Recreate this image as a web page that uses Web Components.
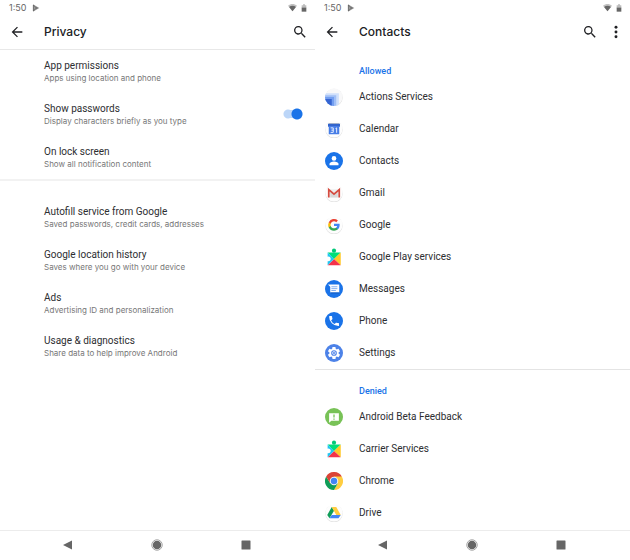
<!DOCTYPE html>
<html lang="en">
<head>
<meta charset="utf-8">
<meta name="viewport" content="width=device-width, initial-scale=1">
<title>Privacy and contacts permissions</title>
<style>
html, body { margin: 0; height: 100%; }
body { background: #fff; color: #2d2e31; font: 10px/14px Roboto, sans-serif; }
</style>
</head>
<body>
<settings-board>
  <phone-screen heading="Privacy" lined>
    <app-icon slot="actions" name="search" label="Search"></app-icon>
    <setting-group>
      <setting-row name="App permissions" note="Apps using location and phone"></setting-row>
      <setting-row name="Show passwords" note="Display characters briefly as you type" switch></setting-row>
      <setting-row name="On lock screen" note="Show all notification content"></setting-row>
    </setting-group>
    <setting-group spaced>
      <setting-row name="Autofill service from Google" note="Saved passwords, credit cards, addresses"></setting-row>
      <setting-row name="Google location history" note="Saves where you go with your device"></setting-row>
      <setting-row name="Ads" note="Advertising ID and personalization"></setting-row>
      <setting-row name="Usage &amp; diagnostics" note="Share data to help improve Android"></setting-row>
    </setting-group>
  </phone-screen>
  <phone-screen heading="Contacts">
    <app-icon slot="actions" name="search" label="Search"></app-icon>
    <app-icon slot="actions" name="more" label="More options"></app-icon>
    <permission-group heading="Allowed">
      <app-row icon="actions">Actions Services</app-row>
      <app-row icon="calendar">Calendar</app-row>
      <app-row icon="contacts">Contacts</app-row>
      <app-row icon="gmail">Gmail</app-row>
      <app-row icon="google">Google</app-row>
      <app-row icon="play">Google Play services</app-row>
      <app-row icon="messages">Messages</app-row>
      <app-row icon="phone">Phone</app-row>
      <app-row icon="settings">Settings</app-row>
    </permission-group>
    <permission-group heading="Denied">
      <app-row icon="feedback">Android Beta Feedback</app-row>
      <app-row icon="play">Carrier Services</app-row>
      <app-row icon="chrome">Chrome</app-row>
      <app-row icon="drive">Drive</app-row>
    </permission-group>
  </phone-screen>
</settings-board>
<script>
const plate = '<circle cx="12" cy="12.7" r="11.6" fill="#dedede"/><circle cx="12" cy="11.8" r="11.6" fill="#fdfdfd"/>';
const disc = c => `<circle cx="12" cy="12" r="12" fill="${c}"/>`;
const ICONS = {
  back: '<path fill="currentColor" d="M20 11H7.8l5.6-5.6L12 4l-8 8 8 8 1.4-1.4L7.8 13H20z"/>',
  search: '<path fill="currentColor" d="M15.5 14h-.8l-.3-.3A6.5 6.5 0 1 0 13.7 14.4l.3.3v.8l5 5 1.5-1.5zm-6 0a4.5 4.5 0 1 1 0-9 4.5 4.5 0 0 1 0 9z"/>',
  more: '<g fill="currentColor"><circle cx="12" cy="5" r="2.2"/><circle cx="12" cy="12" r="2.2"/><circle cx="12" cy="19" r="2.2"/></g>',
  store: '<path fill="#999" d="M3 1l19 11L3 23z"/><path fill="none" stroke="#5a5a5a" stroke-width="2" d="M4 3v18M4 3l12 12M4 21L16 9"/>',
  wifi: '<path fill="#c2c2c2" d="M12 22L0 7C7 1 17 1 24 7z"/><path fill="#666" d="M12 22L3 10.500c5-4 13-4 18 0z"/>',
  battery: '<path fill="#bdbdbd" d="M9 1h6v3h4v9H5V4h4z"/><path fill="#666" d="M5 11h14v12H5z"/>',
  navBack: '<path fill="#666" d="M20 3v18L2 12z"/>',
  navHome: '<circle cx="12" cy="12" r="10.500" fill="none" stroke="#888" stroke-width="1.500"/><circle cx="12" cy="12" r="8.500" fill="#666"/>',
  navRecent: '<rect x="3" y="3" width="18" height="18" rx="1" fill="#666"/>',
  actions: '<circle cx="12" cy="12.7" r="11.6" fill="#dedede"/><circle cx="12" cy="11.8" r="11.6" fill="#f8f8f9"/><clipPath id="a"><circle cx="12" cy="12" r="12"/></clipPath><g clip-path="url(#a)"><path fill="#d0e0fb" d="M0 7h18.500v17H0z"/><path fill="#a0bff6" d="M0 9.500h15v15H0z"/><path fill="#739ef0" d="M0 12h12v12H0z"/><path fill="#3565d2" d="M0 14.500h9v10H0z"/></g>',
  calendar: plate + '<path fill="#c8c8c8" d="M5 4h14v3H5z"/><path fill="#3264cc" d="M4 5h16v4H4z"/><path fill="#477de6" d="M5 8h14v11H5z"/><path fill="none" stroke="#e8f0ff" stroke-width="1.300" d="M7.500 10.500h3.500v6H7.500m1-3H11m3-2l1.500-1V17"/>',
  contacts: disc('#1a73e8') + '<circle cx="12" cy="8.500" r="3.100" fill="#fff"/><path fill="#fff" d="M6 17.500v-1.700c0-2 3-3.200 6-3.200s6 1.200 6 3.200v1.700z"/>',
  gmail: plate + '<path fill="#eee" d="M5 7h14v11H5z"/><path fill="#d9d9d9" d="M7 9l5 5 5-5v9H7z"/><path fill="none" stroke="#d54b3f" stroke-width="2.300" d="M5 18V7.500l7 6 7-6V18"/>',
  google: plate + '<g transform="translate(3.500 3.200) scale(.71)"><path fill="#4285f4" d="M22.600 12.250c0-.8-.1-1.500-.2-2.250H12v4.300h5.900a5 5 0 0 1-2.200 3.300v2.800h3.600c2.100-2 3.300-4.800 3.300-8.150z"/><path fill="#34a853" d="M12 23c3 0 5.500-1 7.300-2.600l-3.600-2.800c-1 .7-2.300 1.100-3.700 1.100-2.900 0-5.300-1.900-6.200-4.600H2.200v2.800A11 11 0 0 0 12 23z"/><path fill="#fbbc05" d="M5.800 14.100a6.600 6.600 0 0 1 0-4.200V7.100H2.200a11 11 0 0 0 0 9.800z"/><path fill="#ea4335" d="M12 5.400c1.600 0 3 .6 4.200 1.600l3.100-3.100A11 11 0 0 0 2.200 7.100l3.600 2.800C6.700 7.300 9.100 5.400 12 5.400z"/></g>',
  play: '<path fill="#00df78" d="M3.500 6H21l-9 9z"/><path fill="#ffc928" d="M21 6v17l-9-8.500z"/><path fill="#f43249" d="M21 23H3.500l8.500-8.500z"/><path fill="#20c6f3" d="M3.500 6l8.500 8.500L3.500 23v-5.500c5.500 1 5.500-7 0-6z"/><circle cx="12" cy="3.500" r="2.800" fill="#00c878"/>',
  messages: disc('#1a73e8') + '<path fill="#fff" d="M4 6h15v10.500H7V9z"/><path stroke="#82aff2" stroke-width="1.300" d="M8.500 9h8M8.500 11.500h8M8.500 14h6"/><path fill="#135cc0" d="M7 16.500h12v1.500H8z"/>',
  phone: disc('#1a73e8') + '<path fill="#fff" transform="translate(3.300 3.300) scale(.73)" d="M6.600 10.800a15 15 0 0 0 6.600 6.600l2.200-2.200c.3-.3.700-.4 1-.2 1.200.4 2.400.6 3.600.6.600 0 1 .4 1 1V20c0 .6-.4 1-1 1A17 17 0 0 1 3 4c0-.6.400-1 1-1h3.500c.6 0 1 .4 1 1 0 1.300.2 2.500.6 3.600.1.400 0 .8-.3 1z"/>',
  settings: disc('#4c82e8') + '<path fill="#fff" transform="translate(1.800 1.800) scale(.85)" d="M19.100 12.900a7 7 0 0 0 0-1.800l2-1.600c.2-.1.200-.4.100-.6l-1.900-3.300c-.1-.2-.4-.3-.6-.2l-2.400 1a7 7 0 0 0-1.600-1l-.4-2.500c0-.2-.2-.4-.5-.4h-3.800c-.2 0-.4.2-.5.400l-.3 2.500a7 7 0 0 0-1.600 1l-2.400-1c-.2-.1-.5 0-.6.200L2.700 8.900c-.1.200 0 .5.200.6l2 1.600a7 7 0 0 0 0 1.800l-2 1.600c-.2.100-.3.400-.2.600l1.900 3.300c.1.200.4.300.6.200l2.400-1a7 7 0 0 0 1.600 1l.4 2.500c0 .3.200.4.500.4h3.800c.3 0 .5-.2.500-.4l.4-2.500a7 7 0 0 0 1.600-1l2.400 1c.2.100.5 0 .6-.2l1.900-3.300c.1-.2 0-.5-.2-.6z"/><circle cx="12" cy="12" r="3.800" fill="#4c82e8"/><circle cx="12" cy="12" r="2.300" fill="#fff"/><circle cx="12" cy="12" r="1.300" fill="#4c82e8"/>',
  feedback: disc('#78c257') + '<path fill="#fff" d="M5.500 7h13v10h-10l-3 2.500z"/><path stroke="#78c257" stroke-width="1.700" d="M12 8.500v4M12 14v1.700"/>',
  chrome: '<path fill="#db4437" d="M12 12L1.600 6A12 12 0 0 1 22.400 6z"/><path fill="#0f9d58" d="M12 12v12A12 12 0 0 1 1.600 6L7 15z"/><path fill="#ffcd40" d="M12 6h10.400A12 12 0 0 1 12 24l5.200-9z"/><path fill="#0f9d58" d="M12 24l5.200-9H7z"/><path fill="#db4437" d="M1.600 6H12L6.800 15z"/><circle cx="12" cy="12" r="5.700" fill="#f4f4f4"/><circle cx="12" cy="12" r="4.300" fill="#4285f4"/>',
  drive: plate + '<path fill="#0f9d58" d="M9 4L3 14.500 6 19l6-10z"/><path fill="#ffcd40" d="M9 4h6l6 10.500h-6z"/><path fill="#4285f4" d="M9 14.500h12L18 19H6z"/>'
};

class BaseElement extends HTMLElement {
  connectedCallback() {
    if (!this.shadowRoot) this.attachShadow({ mode: 'open' }).innerHTML = this.render();
  }
  text(name) {
    return (this.getAttribute(name) || '').replace(/&/g, '&amp;').replace(/</g, '&lt;');
  }
}

customElements.define('svg-icon', class extends BaseElement {
  render() {
    return `<style>
      :host { display: block; width: 18px; height: 18px; flex: none; }
      svg { display: block; width: 100%; height: 100%; }
    </style><svg viewBox="0 0 24 24" aria-hidden="true">${ICONS[this.getAttribute('name')]}</svg>`;
  }
});

customElements.define('app-icon', class extends BaseElement {
  render() {
    return `<style>
      :host { display: block; flex: none; }
      button { display: grid; place-items: center; width: 26px; height: 26px; padding: 0; border: 0; background: none; color: #202124; cursor: pointer; }
      svg-icon { width: var(--glyph, 16px); height: var(--glyph, 16px); }
    </style><button type="button" aria-label="${this.text('label')}"><svg-icon name="${this.getAttribute('name')}"></svg-icon></button>`;
  }
});

customElements.define('status-bar', class extends BaseElement {
  render() {
    return `<style>
      :host { display: flex; align-items: center; height: 15px; padding: 0 7px 0 9px; gap: 3px; font: 9px/12px Inter, sans-serif; color: #666; }
      svg-icon { width: 8px; height: 8px; }
      .store { margin: 0 auto 0 3px; }
      .wifi { width: 9px; height: 9px; }
    </style><time>1:50</time><svg-icon class="store" name="store"></svg-icon><svg-icon class="wifi" name="wifi"></svg-icon><svg-icon name="battery"></svg-icon>`;
  }
});

customElements.define('app-bar', class extends BaseElement {
  render() {
    return `<style>
      :host { display: flex; align-items: center; height: 34px; padding: 0 1px 0 4px; border-bottom: 1px solid transparent; }
      :host([lined]) { border-color: #e8e8e8; padding-right: 2px; }
      h1 { flex: 1; margin: 0 0 0 14px; font: 500 12px/18px Inter, sans-serif; color: #202124; }
    </style><app-icon name="back" label="Back"></app-icon><h1>${this.text('heading')}</h1><slot></slot>`;
  }
});

customElements.define('nav-bar', class extends BaseElement {
  render() {
    return `<style>
      :host { display: block; border-top: 1px solid #ececec; background: #fff; }
      nav { display: flex; justify-content: center; gap: 63px; height: 27px; padding: 0 1px 2px 0; align-items: center; --glyph: 12px; }
    </style><nav aria-label="System">
      <app-icon name="navBack" label="Back"></app-icon>
      <app-icon name="navHome" label="Home"></app-icon>
      <app-icon name="navRecent" label="Recent apps"></app-icon>
    </nav>`;
  }
});

customElements.define('phone-screen', class extends BaseElement {
  render() {
    return `<style>
      :host { display: flex; flex-direction: column; min-width: 0; }
      main { flex: 1; }
    </style><status-bar></status-bar>
    <app-bar heading="${this.text('heading')}" ${this.hasAttribute('lined') ? 'lined' : ''}><slot name="actions"></slot></app-bar>
    <main><slot></slot></main><nav-bar></nav-bar>`;
  }
});

customElements.define('setting-group', class extends BaseElement {
  render() {
    return `<style>
      :host { display: block; }
      :host([spaced]) { border-top: 2px solid #f2f2f2; padding-top: 15px; }
    </style><slot></slot>`;
  }
});

customElements.define('setting-row', class extends BaseElement {
  render() {
    const copy = `<span class="copy"><span class="name">${this.text('name')}</span><span class="note">${this.text('note')}</span></span>`;
    const body = this.hasAttribute('switch')
      ? `<label>${copy}<input type="checkbox" role="switch" checked></label>`
      : `<a href="#">${copy}</a>`;
    return `<style>
      :host { display: block; }
      a, label { display: flex; align-items: center; box-sizing: border-box; height: 43px; padding: 0 12px 2px 44px; color: inherit; text-decoration: none; cursor: pointer; }
      .copy { flex: 1; }
      .name, .note { display: block; }
      .name { font: 10px/15px Roboto, sans-serif; }
      .note { font: 8px/11px Inter, sans-serif; color: #777; }
      input { appearance: none; flex: none; width: 20px; height: 12px; margin: 0; background:
        radial-gradient(circle at 14px 6px, #1a73e8 5px, transparent 6px),
        linear-gradient(#bcd6f8, #bcd6f8) 6px 2px / 8px 8px no-repeat,
        radial-gradient(circle at 5px 6px, #bcd6f8 4px, transparent 5px); }
    </style>${body}`;
  }
});

customElements.define('permission-group', class extends BaseElement {
  render() {
    return `<style>
      :host { display: block; padding-top: 12px; }
      :host(:not(:first-of-type)) { border-top: 1px solid #e4e4e4; }
      h2 { margin: 0 0 0 44px; font: 500 9px/19px Roboto, sans-serif; color: #1a73e8; }
    </style><section><h2>${this.text('heading')}</h2><slot></slot></section>`;
  }
});

customElements.define('app-row', class extends BaseElement {
  render() {
    return `<style>
      :host { display: block; }
      a { display: flex; align-items: center; gap: 16px; height: 32px; padding-left: 10px; font: 10px/14px Roboto, sans-serif; color: inherit; text-decoration: none; }
    </style><a href="#"><svg-icon name="${this.getAttribute('icon')}"></svg-icon><span><slot></slot></span></a>`;
  }
});

customElements.define('settings-board', class extends BaseElement {
  render() {
    return `<style>
      :host { display: grid; grid-template-columns: 1fr 1fr; min-height: 100%; }
    </style><slot></slot>`;
  }
});
</script>
</body>
</html>
